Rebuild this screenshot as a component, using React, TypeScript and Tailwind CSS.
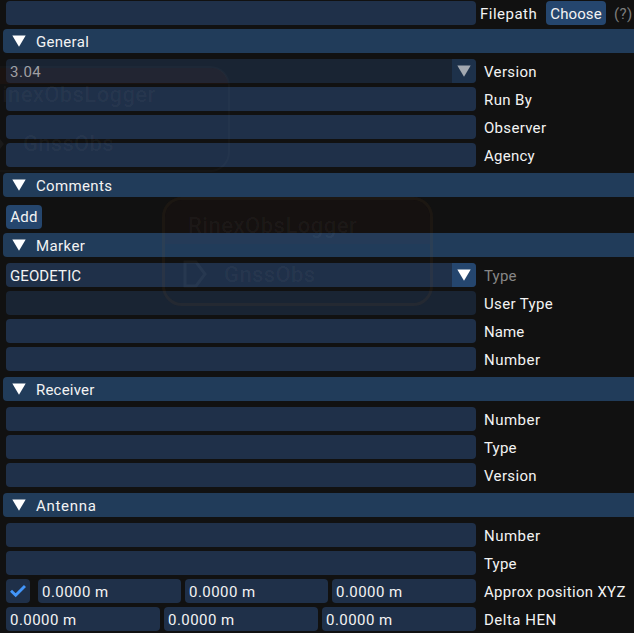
import type { ReactNode } from "react";

function Arrow({ dim = false }: { dim?: boolean }) {
  return (
    <svg width="14" height="12" viewBox="0 0 14 12" className={dim ? "text-[#a3a9b1]" : "text-white"}>
      <path d="M0.3 0.5H13.7L7 11.7Z" fill="currentColor" />
    </svg>
  );
}

function Section({ title, tracking, children }: { title: string; tracking: string; children: ReactNode }) {
  return (
    <section>
      <header className="ml-[3px] flex h-6 items-start rounded-l bg-[#213c5a] pl-[9px]">
        <span className="pt-1.5"><Arrow /></span>
        <span className={`ml-[10px] pt-px leading-6 ${tracking}`}>{title}</span>
      </header>
      <div className="flex flex-col gap-1 pt-1.5 pb-1.5 pl-1.5">{children}</div>
    </section>
  );
}

function Field({ value = "", className = "w-[470px]" }: { value?: string; className?: string }) {
  return (
    <div className={`h-6 shrink-0 rounded bg-[#1f3049] pl-1 pt-px leading-6 ${className}`}>{value}</div>
  );
}

function Row({ label, tracking = "", dim = false, children }: { label: string; tracking?: string; dim?: boolean; children?: ReactNode }) {
  return (
    <div className="flex h-6">
      <div className="flex w-[470px] shrink-0">{children ?? <Field />}</div>
      <span className={`ml-2 pt-px leading-6 ${dim ? "text-[#878787]" : ""} ${tracking}`}>{label}</span>
    </div>
  );
}

function Combo({ value, dim = false, tracking }: { value: string; dim?: boolean; tracking: string }) {
  return (
    <div className={`flex h-6 w-full overflow-hidden rounded ${dim ? "bg-[#192433] text-[#9da2a9]" : "bg-[#1f3049]"}`}>
      <span className={`flex-1 pl-1 pt-px leading-6 ${tracking}`}>{value}</span>
      <span className={`flex w-6 justify-center pt-1.5 ${dim ? "bg-[#1d314a]" : "bg-[#25466e]"}`}>
        <Arrow dim={dim} />
      </span>
    </div>
  );
}

/* Graph node showing faintly through the translucent window. */
function GhostNode() {
  return (
    <div className="pointer-events-none absolute top-[197px] left-[162px] h-[109px] w-[271px] overflow-hidden rounded-[20px] border-3 border-[#a06020]/8 text-[22px] font-medium text-white/4">
      <div className="h-[44px] bg-[#ff4010]/2 pt-[9px] pl-[23px] leading-[33px] tracking-[0.5px]">RinexObsLogger</div>
      <div className="flex h-[60px] items-center pl-[18px]">
        <svg width="25" height="28" viewBox="0 0 25 28" fill="none" stroke="currentColor" strokeWidth="3">
          <path d="M2 2H13L22 14L13 26H2Z" />
        </svg>
        <span className="ml-[16px] tracking-[0.4px]">GnssObs</span>
      </div>
    </div>
  );
}

/* Second node, whose left part lies outside the window. */
function EdgeGhostNode() {
  return (
    <div className="pointer-events-none absolute top-[66px] left-0 h-[106px] w-[230px] rounded-r-[20px] border-2 border-l-0 border-white/2 text-[22px] font-medium text-white/4">
      <div className="h-4 rounded-tr-[18px] bg-[#ff4010]/4" />
      <div className="-mt-[5px] pl-[2px] leading-[32px] tracking-[0.4px]">inexObsLogger</div>
      <div className="mt-[17px] flex items-center leading-[32px]">
        <svg width="5" height="10" viewBox="0 0 5 10" fill="currentColor">
          <path d="M0 0L4 5L0 10Z" />
        </svg>
        <span className="ml-[18px] tracking-[0.3px]">GnssObs</span>
      </div>
    </div>
  );
}

export default function App() {
  return (
    <main className="relative h-[633px] w-[634px] overflow-hidden bg-[#111111] pt-px font-['Roboto',sans-serif] text-[15px] whitespace-nowrap text-[#f3f3f3]">
      <div className="mb-1 flex h-6 pl-1.5 leading-6">
        <Field />
        <span className="ml-1 w-[66px] pt-px tracking-[0.5px]">Filepath</span>
        <button className="h-6 w-[60px] rounded bg-[#25466e] pt-px tracking-[0.1px]">Choose</button>
        <span className="ml-2 pt-px tracking-[0.4px] text-[#7d7d7d]">(?)</span>
      </div>

      <Section title="General" tracking="tracking-[0.3px]">
        <Row label="Version" tracking="tracking-[0.35px]"><Combo value="3.04" dim tracking="tracking-[0.5px]" /></Row>
        <Row label="Run By" tracking="tracking-[0.4px]" />
        <Row label="Observer" tracking="tracking-[0.3px]" />
        <Row label="Agency" tracking="tracking-[0.25px]" />
      </Section>

      <Section title="Comments" tracking="tracking-[0.35px]">
        <button className="-mb-0.5 mt-0.5 h-6 w-9 rounded bg-[#25466e] pt-px tracking-[0.2px]">Add</button>
      </Section>

      <Section title="Marker" tracking="tracking-[0.4px]">
        <Row label="Type" tracking="tracking-[0.2px]" dim><Combo value="GEODETIC" tracking="tracking-[0.1px]" /></Row>
        <Row label="User Type" tracking="tracking-[0.35px]"><div className="h-6 w-full rounded bg-[#192433]" /></Row>
        <Row label="Name" tracking="tracking-[0.1px]" />
        <Row label="Number" tracking="tracking-[0.5px]" />
      </Section>

      <Section title="Receiver" tracking="tracking-[0.2px]">
        <Row label="Number" tracking="tracking-[0.5px]" />
        <Row label="Type" tracking="tracking-[0.2px]" />
        <Row label="Version" tracking="tracking-[0.35px]" />
      </Section>

      <Section title="Antenna" tracking="tracking-[0.7px]">
        <Row label="Number" tracking="tracking-[0.5px]" />
        <Row label="Type" tracking="tracking-[0.2px]" />
        <Row label="Approx position XYZ" tracking="tracking-[0.3px]">
          <div className="mr-2 flex size-6 items-center justify-center rounded bg-[#1f3049]">
            <svg width="16" height="14" viewBox="0 0 16 14" fill="none" stroke="#4296fa" strokeWidth="2.9">
              <path d="M1 6.7L5.7 11.3L15 2" />
            </svg>
          </div>
          <div className="flex gap-1 tracking-[0.45px]">
            <Field value="0.0000 m" className="w-[143px]" />
            <Field value="0.0000 m" className="w-[143px]" />
            <Field value="0.0000 m" className="w-[144px]" />
          </div>
        </Row>
        <Row label="Delta HEN" tracking="tracking-[0.5px]">
          <div className="flex gap-1 tracking-[0.45px]">
            <Field value="0.0000 m" className="w-[154px]" />
            <Field value="0.0000 m" className="w-[154px]" />
            <Field value="0.0000 m" className="w-[154px]" />
          </div>
        </Row>
      </Section>

      <EdgeGhostNode />
      <GhostNode />
    </main>
  );
}
